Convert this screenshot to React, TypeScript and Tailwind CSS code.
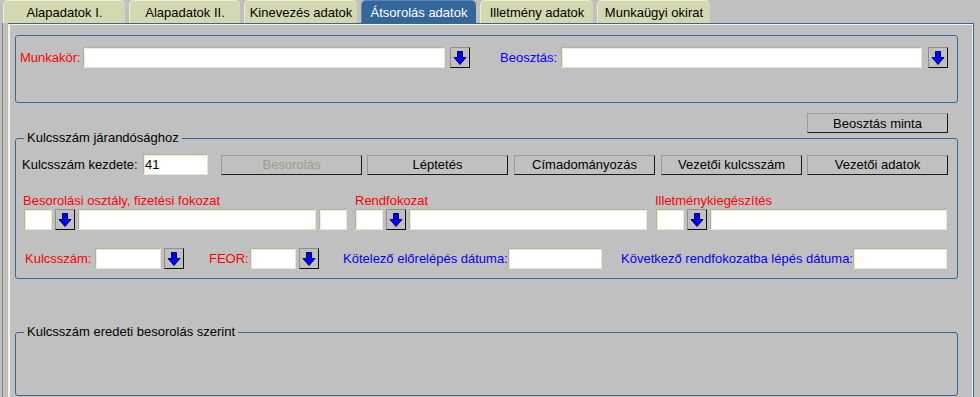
import React from 'react';

const tabs = ['Alapadatok I.', 'Alapadatok II.', 'Kinevezés adatok', 'Átsorolás adatok', 'Illetmény adatok', 'Munkaügyi okirat'];
const tabWidths = ['w-[122px]', 'w-[111px]', 'w-[113px]', 'w-[115px]', 'w-[113px]', 'w-[113px]'];

function Field({ w, value, className = '' }: { w: string; value?: string; className?: string }) {
  return (
    <input
      readOnly
      value={value ?? ''}
      className={`h-[21px] ${w} border border-t-[#b4b494] border-l-[#b4b494] border-r-[#e6e6cf] border-b-[#e6e6cf] bg-white px-[1px] text-[13px] leading-none text-black shadow-[inset_1px_1px_0_#ececd8] outline-none ${className}`}
    />
  );
}

function ArrowBtn({ className = '' }: { className?: string }) {
  return (
    <button
      className={`flex h-[21px] w-[20px] shrink-0 items-center justify-center border border-t-[#8e8e8e] border-l-[#8e8e8e] border-r-[#111] border-b-[#111] bg-[#c0c0c0] ${className}`}
    >
      <svg width="14" height="16" viewBox="0 0 14 16">
        <path d="M4.5 1.5h5v6h3.5l-6 7l-6-7h3.5z" fill="#0000ff" stroke="#00005a" strokeWidth="1" />
      </svg>
    </button>
  );
}

function Btn({ label, disabled, className = '' }: { label: string; disabled?: boolean; className?: string }) {
  return (
    <button
      className={`h-[20px] w-[141px] shrink-0 border border-t-[#9c9c9c] border-l-[#9c9c9c] border-r-[#1a1a1a] border-b-[#1a1a1a] bg-[#c0c0c0] text-[13px] leading-none ${
        disabled ? 'text-[#9d9d86]' : 'text-black'
      } ${className}`}
    >
      {label}
    </button>
  );
}

export default function App() {
  return (
    <div className="h-[397px] w-[980px] overflow-hidden bg-[#c0c0c0] text-[13px] leading-[15px] text-black [font-family:'Liberation_Sans',Arial,sans-serif]">
      {/* tabs */}
      <div className="flex h-[23px] items-stretch gap-[4px] pl-[3px]">
        {tabs.map((t, i) => (
          <div
            key={t}
            className={`${tabWidths[i]} flex items-center justify-center rounded-t-[5px] border-t border-l ${
              i === 3
                ? 'border-[#5a88b6] bg-[#336699] text-white'
                : 'border-[#ecefd6] bg-[#d4d8b0] text-black'
            }`}
          >
            {t}
          </div>
        ))}
      </div>

      {/* panel */}
      <div className="ml-[2px] h-[374px] border-l border-[#85856a] pl-[5px]">
        <div className="h-full w-[966px] border-t border-r border-[#336699]">
          <div className="h-full border-t border-l-2 border-r border-[#f3f3e3] pt-[10px] pl-[5px]">
            {/* Munkakör / Beosztás */}
            <div className="flex h-[68px] w-[943px] items-start rounded-[3px] border border-[#336699] pt-[11px]">
              <span className="ml-[4px] mt-[3px] w-[63px] text-[#ff0000]">Munkakör:</span>
              <Field w="w-[362px]" />
              <ArrowBtn className="ml-[5px]" />
              <span className="ml-[30px] mt-[3px] w-[61px] text-[#0000ff]">Beosztás:</span>
              <Field w="w-[361px]" />
              <ArrowBtn className="ml-[6px]" />
            </div>

            {/* Beosztás minta */}
            <div className="mt-[10px] flex w-[943px] justify-end pr-[10px]">
              <Btn label="Beosztás minta" />
            </div>

            {/* Kulcsszám járandósághoz */}
            <fieldset className="-mt-[2px] h-[148px] w-[943px] rounded-[3px] border border-[#336699]">
              <legend className="ml-[8px] px-[3px] leading-[14px]">Kulcsszám járandósághoz</legend>

              <div className="mt-[9px] flex items-center">
                <span className="ml-[6px] w-[121px]">Kulcsszám kezdete:</span>
                <Field w="w-[65px]" value="41" />
                <Btn label="Besorolás" disabled className="ml-[13px]" />
                <Btn label="Léptetés" className="ml-[5px]" />
                <Btn label="Címadományozás" className="ml-[6px]" />
                <Btn label="Vezetői kulcsszám" className="ml-[6px]" />
                <Btn label="Vezetői adatok" className="ml-[5px]" />
              </div>

              <div className="mt-[18px] flex text-[#ff0000]">
                <span className="ml-[7px] w-[332px]">Besorolási osztály, fizetési fokozat</span>
                <span className="w-[300px]">Rendfokozat</span>
                <span>Illetménykiegészítés</span>
              </div>

              <div className="mt-[1px] flex items-center">
                <Field w="w-[28px]" className="ml-[8px]" />
                <ArrowBtn className="ml-[3px]" />
                <Field w="w-[238px]" className="ml-[3px]" />
                <Field w="w-[28px]" className="ml-[3px]" />
                <Field w="w-[28px]" className="ml-[8px]" />
                <ArrowBtn className="ml-[3px]" />
                <Field w="w-[238px]" className="ml-[3px]" />
                <Field w="w-[28px]" className="ml-[9px]" />
                <ArrowBtn className="ml-[3px]" />
                <Field w="w-[237px]" className="ml-[3px]" />
              </div>

              <div className="mt-[18px] flex items-center">
                <span className="ml-[9px] w-[70px] text-[#ff0000]">Kulcsszám:</span>
                <Field w="w-[66px]" />
                <ArrowBtn className="ml-[3px]" />
                <span className="ml-[25px] w-[41px] text-[#ff0000]">FEOR:</span>
                <Field w="w-[46px]" />
                <ArrowBtn className="ml-[3px]" />
                <span className="ml-[24px] w-[165px] text-[#0000ff]">Kötelező előrelépés dátuma:</span>
                <Field w="w-[94px]" />
                <span className="ml-[19px] w-[232px] text-[#0000ff]">Következő rendfokozatba lépés dátuma:</span>
                <Field w="w-[94px]" />
              </div>
            </fieldset>

            {/* Kulcsszám eredeti besorolás szerint */}
            <fieldset className="mt-[46px] h-[71px] w-[943px] rounded-[3px] border border-[#336699]">
              <legend className="ml-[8px] px-[3px] leading-[14px]">Kulcsszám eredeti besorolás szerint</legend>
            </fieldset>
          </div>
        </div>
      </div>
    </div>
  );
}
